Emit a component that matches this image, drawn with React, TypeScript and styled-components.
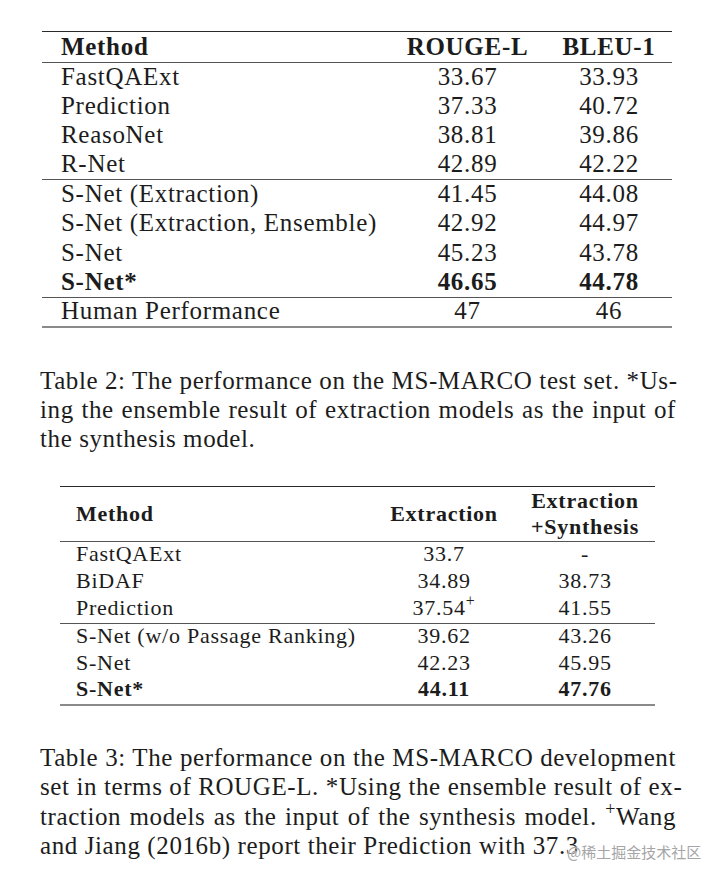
import React from "react";
import styled, { createGlobalStyle } from "styled-components";

const SERIF = `"Liberation Serif", "Tinos", "Times New Roman", Times, serif`;

const Global = createGlobalStyle`
  html, body { margin: 0; padding: 0; background: #ffffff; }
  body { font-family: ${SERIF}; color: #1c1c1c; }
`;

const Page = styled.div`
  width: 726px;
  height: 882px;
  position: relative;
  overflow: hidden;
  background: #fff;
  display: flex;
  flex-direction: column;
  padding-top: 31px;
  box-sizing: border-box;
  font-family: ${SERIF};
  color: #1c1c1c;
`;

const Table = styled.table<{ $left: number; $width: number; $size: number; $ls: number; $top?: number }>`
  margin: ${(p) => p.$top || 0}px 0 0 ${(p) => p.$left}px;
  width: ${(p) => p.$width}px;
  border-collapse: collapse;
  table-layout: fixed;
  font-family: ${SERIF};
  font-size: ${(p) => p.$size}px;
  letter-spacing: ${(p) => p.$ls}px;
  color: #1c1c1c;
  border-top: 1.5px solid #2a2a2a;
  border-bottom: 2px solid #8a8a8a;
`;

const HeadCell = styled.th<{ $align?: string; $pad: number; $h: number }>`
  font-weight: bold;
  text-align: ${(p) => p.$align || "center"};
  padding: 0 0 0 ${(p) => p.$pad}px;
  height: ${(p) => p.$h}px;
  line-height: 26px;
  vertical-align: middle;
  border-bottom: 1.5px solid #555;
`;

const Row = styled.tr<{ $h: number; $rule?: boolean }>`
  height: ${(p) => p.$h}px;
  border-top: ${(p) => (p.$rule ? "1.5px solid #555" : "none")};
`;

const Cell = styled.td<{ $align?: string; $pad?: number; $bold?: boolean; $lift: number }>`
  text-align: ${(p) => p.$align || "center"};
  padding: 0 0 ${(p) => p.$lift}px ${(p) => p.$pad || 0}px;
  font-weight: ${(p) => (p.$bold ? "bold" : "normal")};
  line-height: 1;
  white-space: nowrap;
  vertical-align: middle;
`;

const Sup = styled.sup`
  font-size: 0.72em;
  line-height: 0;
  vertical-align: 0.55em;
`;

const Caption = styled.div<{ $top: number }>`
  margin: ${(p) => p.$top}px 0 0 40px;
  width: 636px;
  font-size: 25px;
  letter-spacing: 0.6px;
  line-height: 29.3px;
  display: flex;
  flex-direction: column;
`;

const Line = styled.div<{ $full?: boolean }>`
  white-space: nowrap;
  text-align: ${(p) => (p.$full ? "justify" : "left")};
  text-align-last: ${(p) => (p.$full ? "justify" : "left")};
`;

const Watermark = styled.div`
  position: absolute;
  left: 567px;
  top: 841px;
  font-family: "Noto Sans CJK SC", "Noto Sans", sans-serif;
  font-size: 15px;
  color: #a5a5a5;
  text-shadow: 0 0 2px #fff, 0 0 2px #fff;
`;

type R = { m: string; a: React.ReactNode; b: string; bold?: boolean; rule?: boolean };

const t1: R[] = [
  { m: "FastQAExt", a: "33.67", b: "33.93" },
  { m: "Prediction", a: "37.33", b: "40.72" },
  { m: "ReasoNet", a: "38.81", b: "39.86" },
  { m: "R-Net", a: "42.89", b: "42.22" },
  { m: "S-Net (Extraction)", a: "41.45", b: "44.08", rule: true },
  { m: "S-Net (Extraction, Ensemble)", a: "42.92", b: "44.97" },
  { m: "S-Net", a: "45.23", b: "43.78" },
  { m: "S-Net*", a: "46.65", b: "44.78", bold: true },
  { m: "Human Performance", a: "47", b: "46", rule: true },
];

const t2: R[] = [
  { m: "FastQAExt", a: "33.7", b: "-" },
  { m: "BiDAF", a: "34.89", b: "38.73" },
  { m: "Prediction", a: <>37.54<Sup>+</Sup></>, b: "41.55" },
  { m: "S-Net (w/o Passage Ranking)", a: "39.62", b: "43.26", rule: true },
  { m: "S-Net", a: "42.23", b: "45.95" },
  { m: "S-Net*", a: "44.11", b: "47.76", bold: true },
];

export default function App() {
  return (
    <Page>
      <Global />
      <Table $left={42} $width={630} $size={25} $ls={0.7}>
        <colgroup>
          <col style={{ width: 347 }} />
          <col style={{ width: 157 }} />
          <col style={{ width: 126 }} />
        </colgroup>
        <thead>
          <tr>
            <HeadCell $align="left" $pad={19} $h={29.5}>Method</HeadCell>
            <HeadCell $pad={0} $h={29.5}>ROUGE-L</HeadCell>
            <HeadCell $pad={0} $h={29.5}>BLEU-1</HeadCell>
          </tr>
        </thead>
        <tbody>
          {t1.map((r) => (
            <Row key={r.m} $h={29.4} $rule={r.rule}>
              <Cell $lift={1.5} $align="left" $pad={19} $bold={r.bold}>{r.m}</Cell>
              <Cell $lift={1.5} $bold={r.bold}>{r.a}</Cell>
              <Cell $lift={1.5} $bold={r.bold}>{r.b}</Cell>
            </Row>
          ))}
        </tbody>
      </Table>

      <Caption $top={38}>
        <Line $full>Table 2: The performance on the MS-MARCO test set. *Us-</Line>
        <Line $full>ing the ensemble result of extraction models as the input of</Line>
        <Line>the synthesis model.</Line>
      </Caption>

      <Table $left={60} $width={595} $size={22} $ls={0.75} $top={33}>
        <colgroup>
          <col style={{ width: 313 }} />
          <col style={{ width: 142 }} />
          <col style={{ width: 140 }} />
        </colgroup>
        <thead>
          <tr>
            <HeadCell $align="left" $pad={16} $h={54}>Method</HeadCell>
            <HeadCell $pad={0} $h={54}>Extraction</HeadCell>
            <HeadCell $pad={0} $h={54}>Extraction<br />+Synthesis</HeadCell>
          </tr>
        </thead>
        <tbody>
          {t2.map((r) => (
            <Row key={r.m} $h={27.2} $rule={r.rule}>
              <Cell $lift={3.5} $align="left" $pad={16} $bold={r.bold}>{r.m}</Cell>
              <Cell $lift={3.5} $bold={r.bold}>{r.a}</Cell>
              <Cell $lift={3.5} $bold={r.bold}>{r.b}</Cell>
            </Row>
          ))}
        </tbody>
      </Table>

      <Caption $top={37}>
        <Line $full>Table 3: The performance on the MS-MARCO development</Line>
        <Line $full>set in terms of ROUGE-L. *Using the ensemble result of ex-</Line>
        <Line $full>traction models as the input of the synthesis model. <Sup>+</Sup>Wang</Line>
        <Line>and Jiang (2016b) report their Prediction with 37.3</Line>
      </Caption>

      <Watermark>@稀土掘金技术社区</Watermark>
    </Page>
  );
}
